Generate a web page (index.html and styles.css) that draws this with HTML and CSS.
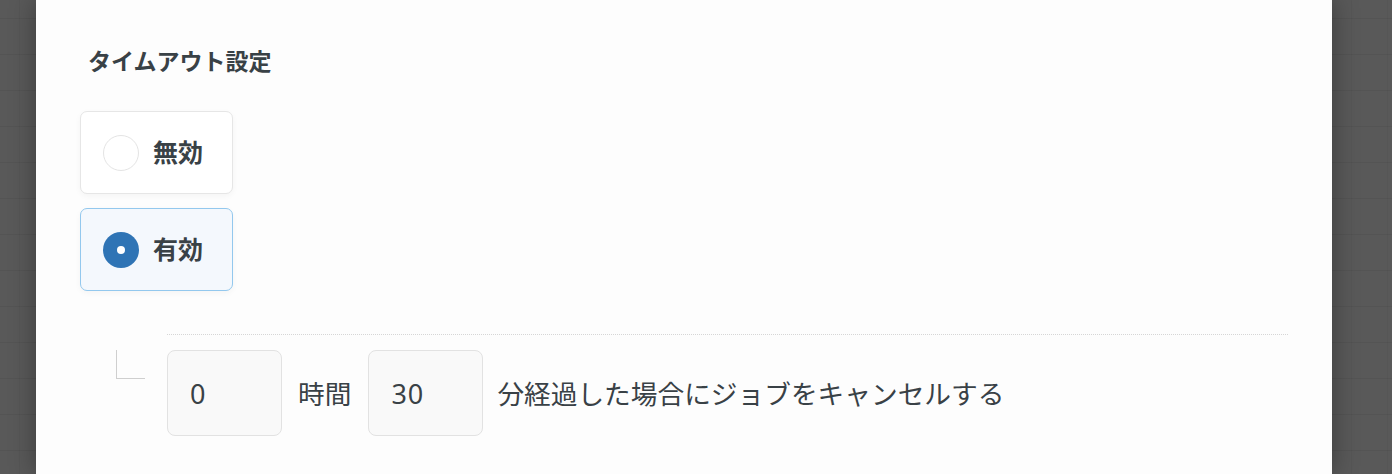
FILE: index.html
```html
<!DOCTYPE html>
<html lang="ja">
<head>
<meta charset="utf-8">
<link rel="stylesheet" href="styles.css">
</head>
<body>
<div class="backdrop">
  <div class="modal">
    <h2 class="title">タイムアウト設定</h2>
    <div class="options">
      <label class="option">
        <span class="radio"></span>
        <span class="option-label">無効</span>
      </label>
      <label class="option selected">
        <span class="radio checked"></span>
        <span class="option-label">有効</span>
      </label>
    </div>
    <div class="divider"></div>
    <div class="sub-row">
      <span class="connector"></span>
      <div class="field">0</div>
      <span class="unit unit-hours">時間</span>
      <div class="field">30</div>
      <span class="unit unit-tail">分経過した場合にジョブをキャンセルする</span>
    </div>
  </div>
</div>
</body>
</html>
```

FILE: styles.css
```css
html, body {
  margin: 0;
  padding: 0;
  height: 100%;
  overflow: hidden;
}
body {
  font-family: "Noto Sans CJK JP", "Noto Sans", sans-serif;
  color: #3a4247;
  background-color: #595959;
  background-image:
    repeating-linear-gradient(to bottom, transparent 0, transparent 18px, rgba(0,0,0,0.06) 18px, rgba(0,0,0,0.06) 19px, transparent 19px, transparent 36px),
    repeating-linear-gradient(to right, transparent 0, transparent 19px, rgba(0,0,0,0.04) 19px, rgba(0,0,0,0.04) 20px, transparent 20px, transparent 36px);
}
.backdrop {
  height: 100%;
  padding-left: 36px;
}
.modal {
  width: 1296px;
  height: 100%;
  background: #fdfdfd;
  box-shadow: 0 0 24px rgba(0,0,0,0.35);
  box-sizing: border-box;
  padding: 44px 44px 0 44px;
}
.title {
  margin: 0 0 35px 0;
  padding-left: 8px;
  font-size: 23px;
  line-height: 32px;
  font-weight: 700;
  color: #394146;
}
.options {
  display: flex;
  flex-direction: column;
  align-items: flex-start;
  gap: 14px;
}
.option {
  width: 153px;
  height: 83px;
  box-sizing: border-box;
  border: 1px solid #e6e6e6;
  border-radius: 7px;
  background: #ffffff;
  box-shadow: 0 2px 6px rgba(0,0,0,0.04);
  display: flex;
  align-items: center;
  padding-left: 22px;
  gap: 14px;
}
.option.selected {
  border-color: #93c8ee;
  background: #f4f8fd;
}
.radio {
  width: 36px;
  height: 36px;
  box-sizing: border-box;
  border-radius: 50%;
  border: 1px solid #e4e4e4;
  background: #ffffff;
  position: relative;
  flex: none;
}
.radio.checked {
  border: none;
  background: #2f74b5;
}
.radio.checked::after {
  content: "";
  position: absolute;
  left: 50%;
  top: 50%;
  width: 8px;
  height: 8px;
  margin: -4px 0 0 -4px;
  border-radius: 50%;
  background: #ffffff;
}
.option-label {
  font-size: 25px;
  font-weight: 700;
  line-height: 32px;
  margin-top: -3px;
  color: #394146;
}
.divider {
  margin: 43px 0 0 87px;
  border-top: 1px dotted #d6d6d6;
}
.sub-row {
  display: flex;
  align-items: center;
  margin: 15px 0 0 36px;
  height: 86px;
}
.connector {
  align-self: flex-start;
  width: 28px;
  height: 28px;
  border-left: 1px solid #cfcfcf;
  border-bottom: 1px solid #cfcfcf;
  margin-right: 22px;
  flex: none;
}
.field {
  width: 115px;
  height: 86px;
  box-sizing: border-box;
  border: 1px solid #e2e2e2;
  border-radius: 8px;
  background: #f9f9f9;
  display: flex;
  align-items: center;
  padding-left: 22px;
  font-size: 27px;
  letter-spacing: 1px;
  color: #394146;
  font-family: "Noto Sans", "Noto Sans CJK JP", sans-serif;
}
.unit {
  font-size: 26.7px;
  line-height: 36px;
  margin: 0 15px 0 16px;
  color: #394146;
}
.unit.unit-hours {
  margin-right: 17px;
}
.unit.unit-tail {
  margin-left: 14px;
}
```
